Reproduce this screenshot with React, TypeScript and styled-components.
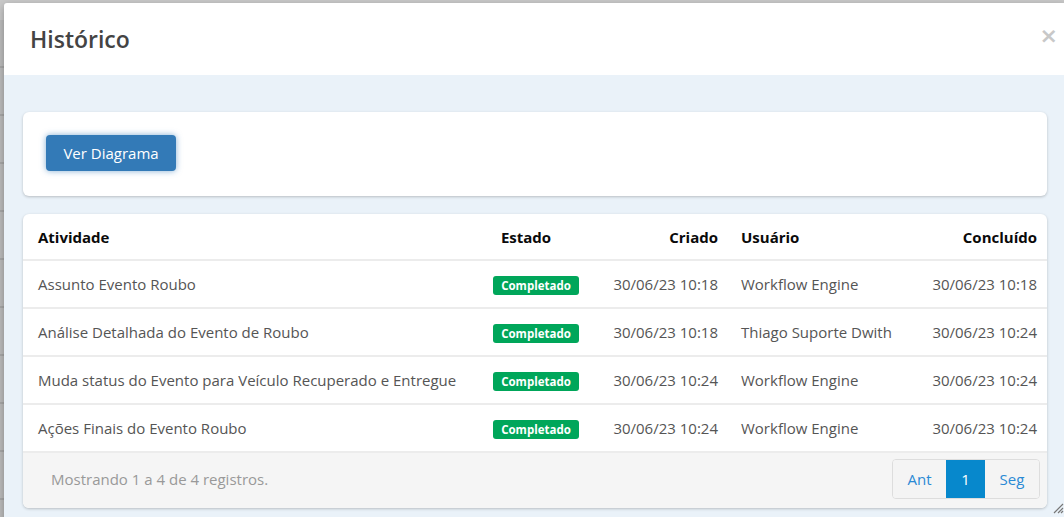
import React from 'react'
import styled, { createGlobalStyle } from 'styled-components'

const GlobalStyle = createGlobalStyle`
  html, body {
    margin: 0;
    padding: 0;
    overflow: hidden;
    font-family: 'Open Sans', 'Noto Sans', sans-serif;
  }
`

const Page = styled.div`
  display: flex;
  align-items: flex-start;
  height: 100vh;
  background: #c9c9c9;
  overflow: hidden;
`

const BackStrip = styled.div`
  width: 4px;
  flex-shrink: 0;
  height: 100%;
  margin-top: 20px;
  background: repeating-linear-gradient(
    to bottom,
    #bdbdbd 0px,
    #bdbdbd 46px,
    #a9a9a9 46px,
    #a9a9a9 48px
  );
`

const Modal = styled.div`
  position: relative;
  flex-shrink: 0;
  width: 1062px;
  height: 520px;
  margin-top: 3px;
  background: #fff;
  border-radius: 3px 3px 0 0;
  box-shadow: 0 3px 9px rgba(0, 0, 0, 0.3);
  display: flex;
  flex-direction: column;
`

const Header = styled.div`
  height: 72px;
  box-sizing: border-box;
  padding: 0 8px 0 26px;
  display: flex;
  align-items: center;
  justify-content: space-between;
`

const Title = styled.h4`
  margin: 0;
  font-size: 23px;
  font-weight: 600;
  color: #444;
`

const Close = styled.span`
  font-size: 22px;
  font-weight: 700;
  color: #c8c8c8;
  line-height: 1;
  margin-top: -6px;
  font-family: 'DejaVu Sans', sans-serif;
`

const Body = styled.div`
  flex: 1;
  background: #eaf2f9;
  padding: 37px 19px 0;
  display: flex;
  flex-direction: column;
  gap: 18px;
`

const Card = styled.div<{ $pad?: string }>`
  background: #fff;
  border-radius: 6px;
  box-shadow: 0 1px 3px rgba(0, 0, 0, 0.22);
  padding: ${(p) => p.$pad || '0'};
  overflow: hidden;
`

const PrimaryButton = styled.button`
  height: 36px;
  width: 130px;
  border: none;
  border-radius: 4px;
  background: #337ab7;
  color: #fff;
  font-family: inherit;
  font-size: 15px;
  box-shadow: 0 0 6px rgba(51, 122, 183, 0.6);
  cursor: pointer;
`

const Row = styled.div<{ $head?: boolean }>`
  display: grid;
  grid-template-columns: 460px 106px 139px 177px 1fr;
  align-items: center;
  height: ${(p) => (p.$head ? '47px' : '48px')};
  box-sizing: border-box;
  border-bottom: 2px solid #ececec;
  font-size: 15px;
  color: ${(p) => (p.$head ? '#0a0a0a' : '#555')};
  font-weight: ${(p) => (p.$head ? 700 : 400)};
`

const Cell = styled.div<{ $align?: 'left' | 'center' | 'right'; $pl?: number; $pr?: number }>`
  text-align: ${(p) => p.$align || 'left'};
  padding-left: ${(p) => p.$pl ?? 0}px;
  padding-right: ${(p) => p.$pr ?? 0}px;
  white-space: nowrap;
`

const Badge = styled.span`
  display: inline-block;
  background: #00a65a;
  color: #fff;
  font-size: 11.5px;
  font-weight: 700;
  line-height: 19px;
  width: 86px;
  text-align: center;
  border-radius: 3px;
`

const Footer = styled.div`
  background: #f5f5f5;
  height: 55px;
  box-sizing: border-box;
  display: flex;
  align-items: center;
  justify-content: space-between;
  padding: 0 7px 4px 28px;
`

const Info = styled.span`
  font-size: 15px;
  color: #999;
`

const Pager = styled.div`
  display: flex;
  box-sizing: border-box;
  border: 1px solid #ddd;
  border-radius: 4px;
  overflow: hidden;
  height: 40px;
`

const PageButton = styled.span<{ $active?: boolean; $w: number }>`
  width: ${(p) => p.$w}px;
  display: flex;
  align-items: center;
  justify-content: center;
  font-size: 15px;
  color: ${(p) => (p.$active ? '#fff' : '#2a8ad4')};
  background: ${(p) => (p.$active ? '#0788cc' : '#f4f4f4')};
`

const Grip = styled.svg`
  position: absolute;
  right: 2px;
  bottom: 9px;
`

const rows = [
  ['Assunto Evento Roubo', '30/06/23 10:18', 'Workflow Engine', '30/06/23 10:18'],
  ['Análise Detalhada do Evento de Roubo', '30/06/23 10:18', 'Thiago Suporte Dwith', '30/06/23 10:24'],
  ['Muda status do Evento para Veículo Recuperado e Entregue', '30/06/23 10:24', 'Workflow Engine', '30/06/23 10:24'],
  ['Ações Finais do Evento Roubo', '30/06/23 10:24', 'Workflow Engine', '30/06/23 10:24'],
]

export default function App() {
  return (
    <Page>
      <GlobalStyle />
      <BackStrip />
      <Modal>
        <Header>
          <Title>Histórico</Title>
          <Close>×</Close>
        </Header>
        <Body>
          <Card $pad="23px 23px 25px">
            <PrimaryButton>Ver Diagrama</PrimaryButton>
          </Card>
          <Card>
            <Row $head>
              <Cell $pl={15}>Atividade</Cell>
              <Cell $align="center" $pr={20}>Estado</Cell>
              <Cell $align="right" $pr={10}>Criado</Cell>
              <Cell $pl={13}>Usuário</Cell>
              <Cell $align="right" $pr={10}>Concluído</Cell>
            </Row>
            {rows.map(([activity, created, user, done]) => (
              <Row key={activity}>
                <Cell $pl={15}>{activity}</Cell>
                <Cell $align="center"><Badge>Completado</Badge></Cell>
                <Cell $align="right" $pr={10}>{created}</Cell>
                <Cell $pl={13}>{user}</Cell>
                <Cell $align="right" $pr={10}>{done}</Cell>
              </Row>
            ))}
            <Footer>
              <Info>Mostrando 1 a 4 de 4 registros.</Info>
              <Pager>
                <PageButton $w={53}>Ant</PageButton>
                <PageButton $w={39} $active>1</PageButton>
                <PageButton $w={54}>Seg</PageButton>
              </Pager>
            </Footer>
          </Card>
        </Body>
        <Grip width="12" height="12" viewBox="0 0 12 12">
          <path d="M11 2 L2 11 M11 6 L6 11 M11 9 L9 11" stroke="#777" strokeWidth="1.2" />
        </Grip>
      </Modal>
    </Page>
  )
}
